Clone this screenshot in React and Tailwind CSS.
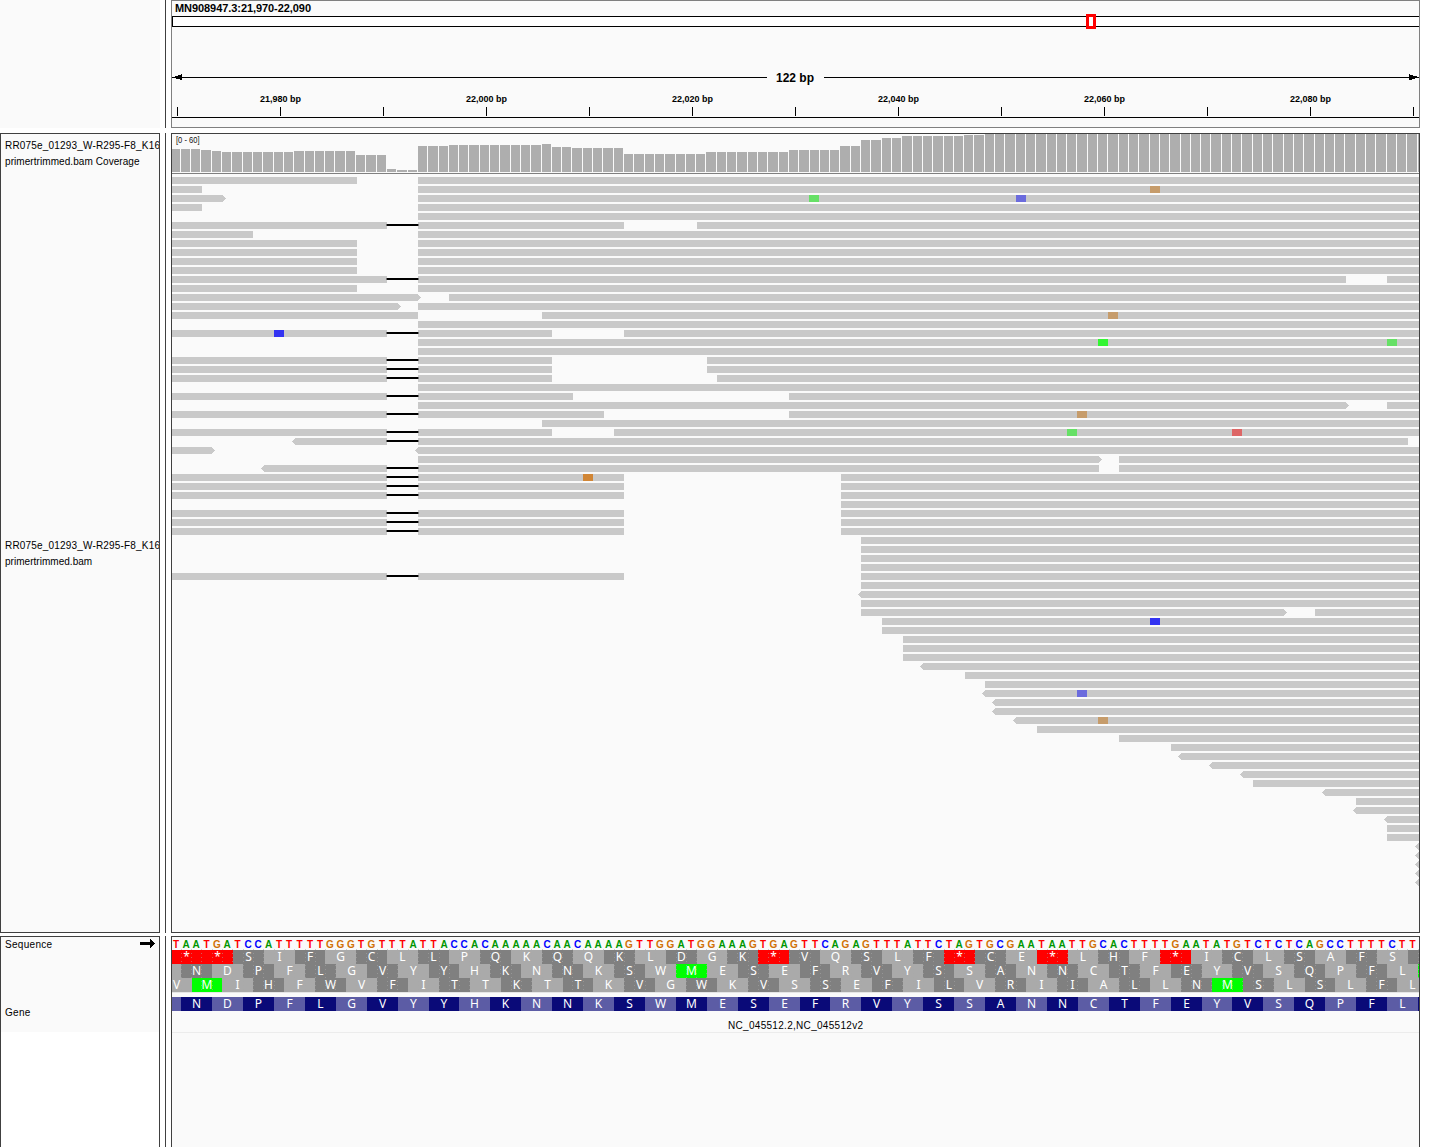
import React from "react";

const BASE_W = 10.306;
const ORIGIN = 171;
const RIGHT = 1419;

const edge = (n) => Math.floor(ORIGIN + 0.05 + BASE_W * n);
const clampX = (x) => Math.max(172, Math.min(RIGHT, x));

const runs = [
  [3, 149], [1, 150], [1, 151], [7, 152], [6, 151], [3, 155], [1, 169], [2, 170],
  [3, 146], [9, 145], [1, 144], [2, 147], [5, 148], [8, 154], [8, 152], [5, 150],
  [2, 146], [2, 140], [2, 138], [6, 136], [2, 135], [43, 134],
];
const coverage = runs.flatMap(([count, top]) => Array(count).fill(top));

const TAN = "#c69c6b";
const ORANGE = "#d18636";
const GREEN = "#66e066";
const LIME = "#33f533";
const VIOLET = "#6b6bdd";
const BLUE = "#3333f2";
const ROSE = "#dd6666";

// Segment: [start, end, head]; head is "<" or ">" for a strand arrow.
const E = RIGHT;
const del = (end) => [[172, 387], [418, end]];
const rows = [
  { s: [[172, 357], [418, E]] },
  { s: [[172, 202], [418, E]], m: [[1150, TAN]] },
  { s: [[172, 226, ">"], [418, E]], m: [[809, GREEN], [1016, VIOLET]] },
  { s: [[172, 202], [418, E]] },
  { s: [[418, E]] },
  { s: [...del(624), [697, E]], d: 1 },
  { s: [[172, 253], [418, E]] },
  { s: [[172, 357], [418, E]] },
  { s: [[172, 357], [418, E]] },
  { s: [[172, 357], [418, E]] },
  { s: [[172, 357], [418, E]] },
  { s: [...del(1346), [1387, E]], d: 1 },
  { s: [[172, 357], [418, E]] },
  { s: [[172, 421, ">"], [449, E]] },
  { s: [[172, 401, ">"], [418, E]] },
  { s: [[172, 418], [542, E]], m: [[1108, TAN]] },
  { s: [[418, E]] },
  { s: [...del(552), [624, E]], d: 1, m: [[274, BLUE]] },
  { s: [[418, E]], m: [[1098, LIME], [1387, GREEN]] },
  { s: [[418, E]] },
  { s: [...del(552), [707, E]], d: 1 },
  { s: [...del(552), [707, E]], d: 1 },
  { s: [...del(552), [717, E]], d: 1 },
  { s: [[418, E]] },
  { s: [...del(573), [789, E]], d: 1 },
  { s: [[418, 1349, ">"], [1387, E]] },
  { s: [...del(604), [789, E]], d: 1, m: [[1077, TAN]] },
  { s: [[542, E]] },
  { s: [...del(552), [614, E]], d: 1, m: [[1067, GREEN], [1232, ROSE]] },
  { s: [[292, 387, "<"], [418, 1408]], d: 1 },
  { s: [[172, 215, ">"], [415, E, "<"]] },
  { s: [[418, 1102, ">"], [1119, E]] },
  { s: [[261, 387, "<"], [418, 1099], [1119, E]], d: 1 },
  { s: [...del(624), [841, E]], d: 1, m: [[583, ORANGE]] },
  { s: [...del(624), [841, E]], d: 1 },
  { s: [...del(624), [841, E]], d: 1 },
  { s: [[841, E]] },
  { s: [...del(624), [841, E]], d: 1 },
  { s: [...del(624), [841, E]], d: 1 },
  { s: [...del(624), [841, E]], d: 1 },
  { s: [[861, E]] },
  { s: [[861, E]] },
  { s: [[861, E]] },
  { s: [[861, E]] },
  { s: [...del(624), [861, E]], d: 1 },
  { s: [[861, E]] },
  { s: [[858, E, "<"]] },
  { s: [[861, E]] },
  { s: [[861, 1287, ">"], [1315, E]] },
  { s: [[882, E]], m: [[1150, BLUE]] },
  { s: [[882, E]] },
  { s: [[903, E]] },
  { s: [[903, E]] },
  { s: [[903, E]] },
  { s: [[920, E, "<"]] },
  { s: [[965, E]] },
  { s: [[985, E]] },
  { s: [[982, E, "<"]], m: [[1077, VIOLET]] },
  { s: [[992, E, "<"]] },
  { s: [[992, E, "<"]] },
  { s: [[1013, E, "<"]], m: [[1098, TAN]] },
  { s: [[1037, E]] },
  { s: [[1119, E]] },
  { s: [[1171, E]] },
  { s: [[1178, E, "<"]] },
  { s: [[1209, E, "<"]] },
  { s: [[1240, E, "<"]] },
  { s: [[1253, E]] },
  { s: [[1322, E, "<"]] },
  { s: [[1356, E]] },
  { s: [[1353, E, "<"]] },
  { s: [[1384, E, "<"]] },
  { s: [[1387, E]] },
  { s: [[1387, E]] },
  ...Array(5).fill({ s: [[1415, E + 6, "<"]] }),
];

const codons =
  "T AAT GAT CCA TTT TTG GGT GTT TAT TAC CAC AAA AAC AAC AAA AGT TGG ATG GAA AGT GAG TTC AGA GTT TAT TCT AGT GCG AAT AAT TGC ACT TTT GAA TAT GTC TCT CAG CCT TTT CTT";
const bases = codons.replace(/ /g, "").split("");
const baseColor = { A: "text-[#009600]", C: "text-[#0000ff]", G: "text-[#d17105]", T: "text-[#ff0000]" };

const frames = [
  { start: 0, parity: 0, aa: "**SIFGCLLPQKQQKLDGK*VQSLF*CE*LHF*ICLSAFS " },
  { start: -2, parity: 1, aa: " NDPFLGVYYHKNNKSWMESEFRVYSSANNCTFEYVSQPFLm" },
  { start: -1, parity: 1, aa: "VMIHFWVFITTKTTKVGWKVSSEFILVRIIALLNMSLSLFL" },
];
const geneRow = { start: -2, parity: 1, aa: " NDPFLGVYYHKNNKSWMESEFRVYSSANNCTFEYVSQPFL " };

function Read({ seg, y }) {
  const [a, b, head] = seg;
  let d = `M${a} ${y}H${b}V${y + 7}H${a}Z`;
  if (head === ">") d = `M${a} ${y}H${b - 3}L${b} ${y + 3.5}L${b - 3} ${y + 7}H${a}Z`;
  if (head === "<") d = `M${b} ${y}H${a + 3}L${a} ${y + 3.5}L${a + 3} ${y + 7}H${b}Z`;
  return <path d={d} fill="#c9c9c9" />;
}

function Coverage() {
  return (
    <div className="h-[40px] border-b border-[#808080]">
      <svg className="block h-[39px] w-[1247px]" viewBox="172 134 1247 39" shapeRendering="crispEdges">
        {coverage.map((top, i) => {
          const x = clampX(edge(i));
          return <rect key={i} x={x} y={top} width={Math.max(1, edge(i + 1) - 1 - x)} height={172 - top} fill="#aeaeae" />;
        })}
        <text x="176" y="143" fontSize="8.5" textLength="23.5" lengthAdjust="spacingAndGlyphs" fill="#111">[0 - 60]</text>
      </svg>
    </div>
  );
}

function Alignments() {
  return (
    <svg className="block h-[758px] w-[1247px]" viewBox="172 174 1247 758" shapeRendering="crispEdges">
      {rows.map((r, i) => {
        const y = 177 + 9 * i;
        return (
          <g key={i}>
            {r.s.map((seg, k) => <Read key={k} seg={seg} y={y} />)}
            {r.d && <rect x="386" y={y + 2} width="33" height="2" fill="#707070" />}
            {r.d && <rect x="387" y={y + 2} width="31" height="2" fill="#000" />}
            {(r.m || []).map(([x, c]) => <rect key={x} x={x} y={y} width="10" height="7" fill={c} />)}
          </g>
        );
      })}
    </svg>
  );
}

function Ruler() {
  const ticks = Array.from({ length: 13 }, (_, i) => 177 + 103 * i);
  return (
    <svg className="block h-[126px] w-[1247px]" viewBox="172 1 1247 126" shapeRendering="crispEdges">
      <text x="175" y="12" fontSize="11" fontWeight="700" textLength="136">MN908947.3:21,970-22,090</text>
      <rect x="172.5" y="16.5" width="1260" height="10" fill="#fff" stroke="#000" />
      <rect x="1087.5" y="15.5" width="7" height="12" fill="#fff" stroke="#f00" strokeWidth="3" />
      <path d="M172 77H767V78H172ZM824 77H1419V78H824Z" />
      <path d="M174 77H175V76H178V75H181V74H182V80H180V79H176V78H174ZM1409 74H1410V75H1413V76H1417V78H1415V79H1412V80H1409Z" />
      <text x="776" y="82" fontSize="12" fontWeight="700" textLength="38">122 bp</text>
      {ticks.map((x, i) => (
        <g key={x}>
          <rect x={x} y="107" width="1" height="9" />
          {i % 2 === 1 && (
            <text x={x - 20} y="102" fontSize="9.5" fontWeight="700" textLength="41" lengthAdjust="spacingAndGlyphs">
              {`${(21970 + i * 10).toLocaleString("en-US")} bp`}
            </text>
          )}
        </g>
      ))}
      <rect x="172" y="117" width="1247" height="1" />
    </svg>
  );
}

function AminoRow({ row, gene }) {
  const at = (n) => Math.round(ORIGIN - 0.1 + BASE_W * n);
  return (
    <div className="flex h-[14px] w-[1247px]">
      {row.aa.split("").map((ch, i) => {
        const a = at(row.start + 3 * i);
        const b = at(row.start + 3 * i + 3);
        const dark = (i + row.parity) % 2 === 0;
        let bg = dark ? "bg-[#808080]" : "bg-[#aaaaaa]";
        if (gene) bg = dark ? "bg-[#0a0a78]" : "bg-[#5c5ca5]";
        else if (ch === "*") bg = "bg-[#ff0000]";
        else if (ch === "M" || ch === "m") bg = "bg-[#00ff00]";
        return (
          <div
            key={i}
            className={`shrink-0 text-center text-[12px] leading-[14px] text-white font-['Noto_Sans','Open_Sans',sans-serif] ${bg}`}
            style={{ width: b - a, marginLeft: i === 0 ? a - 172 : 0 }}
          >
            {ch === "m" ? "" : ch}
          </div>
        );
      })}
    </div>
  );
}

function BaseGuides() {
  return (
    <svg className="pointer-events-none absolute left-0 top-[11px] h-[44px] w-[1247px]" viewBox="172 948 1247 44" shapeRendering="crispEdges">
      {bases.map((_, i) => (
        <path key={i} d={`M${edge(i + 1) + 0.5} 949V992`} stroke="#a8a8a8" strokeOpacity="0.55" strokeDasharray="1 3" />
      ))}
    </svg>
  );
}

function SequenceTracks() {
  return (
    <div className="relative h-full overflow-x-clip">
      <div className="flex h-[13px]">
        {bases.map((b, i) => (
          <span
            key={i}
            className={`shrink-0 text-center text-[10px] font-bold leading-[15px] ${baseColor[b]}`}
            style={{ width: edge(i + 1) - edge(i), marginLeft: i === 0 ? -1 : 0 }}
          >
            {b}
          </span>
        ))}
      </div>
      {frames.map((f) => <AminoRow key={f.start} row={f} />)}
      <BaseGuides />
      <div className="mb-[4px] h-px bg-[#e6e6e6]" />
      <AminoRow row={geneRow} gene />
      <div className="h-[22px] border-b border-[#ececec] pl-[556px] pt-[9px] text-[10px] leading-[12px] tracking-[0.3px]">
        NC_045512.2,NC_045512v2
      </div>
    </div>
  );
}

const labelText = "whitespace-nowrap text-[10px] leading-[16px]";

function Row({ height, name, children }) {
  return (
    <div className={`flex ${height}`}>
      <div className="w-[160px]">{name}</div>
      <div className="ml-[5px] w-px bg-[#404040]" />
      <div className="ml-[5px] w-[1249px]">{children}</div>
    </div>
  );
}

export default function App() {
  return (
    <div className="flex h-[1147px] w-[1437px] flex-col overflow-hidden bg-white text-black font-['Liberation_Sans',Arial,sans-serif]">
      <Row height="h-[128px]" name={<div className="h-full bg-[#fafafa]" />}>
        <div className="h-full border border-[#808080] bg-[#fafafa]"><Ruler /></div>
      </Row>
      <div className="h-[5px]" />
      <Row
        height="h-[800px]"
        name={
          <div className="h-full overflow-hidden border border-[#404040] bg-[#fafafa] pl-[4px]">
            <div className={`h-[400px] pt-[4px] tracking-[0.07px] ${labelText}`}>
              <div className="tracking-[0.18px]">RR075e_01293_W-R295-F8_K16</div>
              <div>primertrimmed.bam Coverage</div>
            </div>
            <div className={`pt-[4px] tracking-[0.03px] ${labelText}`}>
              <div className="tracking-[0.18px]">RR075e_01293_W-R295-F8_K16</div>
              <div>primertrimmed.bam</div>
            </div>
          </div>
        }
      >
        <div className="h-full border border-[#404040] bg-[#fafafa]">
          <Coverage />
          <Alignments />
        </div>
      </Row>
      <div className="h-[3px]" />
      <Row
        height="h-[211px]"
        name={
          <div className="h-full border border-b-0 border-[#404040] bg-white">
            <div className={`h-[95px] bg-[#fafafa] pl-[4px] tracking-[0.3px] ${labelText}`}>
              <div className="flex h-[68px] justify-between pr-[4px]">
                <span>Sequence</span>
                <svg className="mt-[2px] h-[9px] w-[15px]" viewBox="0 0 15 9" shapeRendering="crispEdges">
                  <path d="M0 3H10V0H11V1H12V2H13V3H14V4H15V5H14V6H13V7H12V8H11V9H10V6H0Z" />
                </svg>
              </div>
              <div>Gene</div>
            </div>
          </div>
        }
      >
        <div className="h-full border border-b-0 border-[#404040] bg-[#fafafa]"><SequenceTracks /></div>
      </Row>
    </div>
  );
}
